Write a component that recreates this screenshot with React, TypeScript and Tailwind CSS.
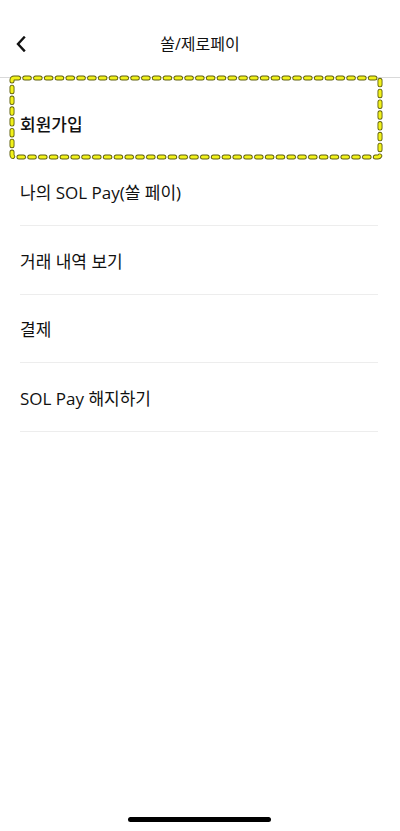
import React from "react";

const items = ["회원가입", "나의 SOL Pay(쏠 페이)", "거래 내역 보기", "결제", "SOL Pay 해지하기"];

export default function App() {
  return (
    <div
      className="relative w-[400px] h-[831px] bg-white overflow-hidden text-[#111111]"
      style={{ fontFamily: '"Open Sans", "Noto Sans CJK KR", sans-serif' }}
    >
      <header className="relative h-[78px] border-b border-[#d9d9d9] flex items-center justify-center">
        <button className="absolute left-[13px] top-[35px] w-[16px] h-[18px] flex items-center justify-center">
          <svg width="12" height="16" viewBox="0 0 12 16" fill="none">
            <path d="M9 1.5 L3 8 L9 14.5" stroke="#111" strokeWidth="2.4" strokeLinecap="square" strokeLinejoin="miter" />
          </svg>
        </button>
        <h1 className="text-[16px] font-normal mt-[11px]">쏠/제로페이</h1>
      </header>

      <ul className="pt-[11px]">
        {items.map((t, i) => (
          <li key={t} className="ml-[20px] mr-[22px] h-[68.5px] border-b border-[#ededed] flex items-center">
            <span className={`text-[17px] mt-[3px] ${i === 0 ? "font-medium" : "font-normal"}`}>{t}</span>
          </li>
        ))}
      </ul>

      <svg className="absolute left-[8px] top-[74px]" width="376" height="87" viewBox="0 0 376 87" fill="none">
        <rect x="4" y="4" width="368" height="79" rx="2" stroke="#5f5f10" strokeWidth="5" strokeDasharray="4.5 6.3" strokeLinecap="round" />
        <rect x="4" y="4" width="368" height="79" rx="2" stroke="#f2f21a" strokeWidth="3.2" strokeDasharray="4.5 6.3" strokeLinecap="round" />
      </svg>

      <div className="absolute left-[128px] bottom-[9px] w-[143px] h-[5px] rounded-full bg-black" />
    </div>
  );
}
